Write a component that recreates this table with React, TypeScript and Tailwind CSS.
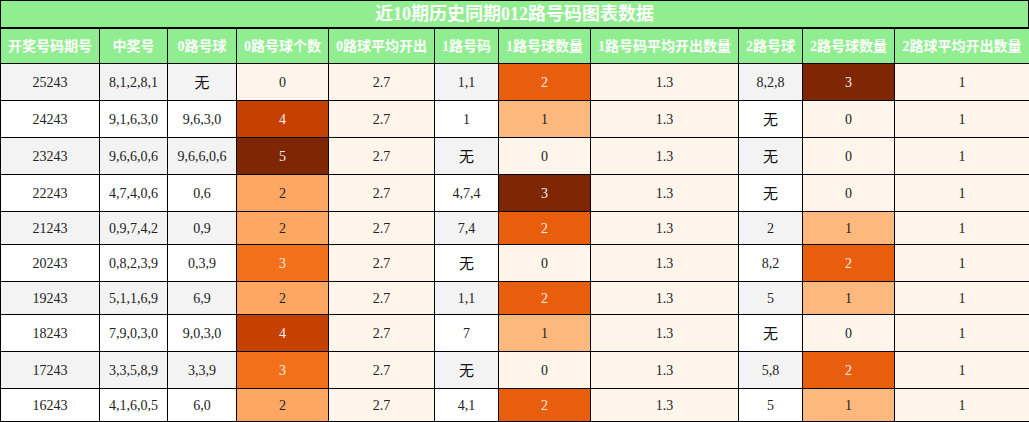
const headers = [
  '开奖号码期号',
  '中奖号',
  '0路号球',
  '0路号球个数',
  '0路球平均开出',
  '1路号码',
  '1路号球数量',
  '1路号码平均开出数量',
  '2路号球',
  '2路号球数量',
  '2路球平均开出数量',
];

const colWidths = ['w-[99px]', 'w-[68px]', 'w-[69px]', 'w-[92px]', 'w-[106px]', 'w-[64px]', 'w-[92px]', 'w-[148px]', 'w-[64px]', 'w-[92px]', 'w-[135px]'];

type Row = [string, string, string, number, string, string, number, string, string, number, string];

const rows: Row[] = [
  ['25243', '8,1,2,8,1', '无', 0, '2.7', '1,1', 2, '1.3', '8,2,8', 3, '1'],
  ['24243', '9,1,6,3,0', '9,6,3,0', 4, '2.7', '1', 1, '1.3', '无', 0, '1'],
  ['23243', '9,6,6,0,6', '9,6,6,0,6', 5, '2.7', '无', 0, '1.3', '无', 0, '1'],
  ['22243', '4,7,4,0,6', '0,6', 2, '2.7', '4,7,4', 3, '1.3', '无', 0, '1'],
  ['21243', '0,9,7,4,2', '0,9', 2, '2.7', '7,4', 2, '1.3', '2', 1, '1'],
  ['20243', '0,8,2,3,9', '0,3,9', 3, '2.7', '无', 0, '1.3', '8,2', 2, '1'],
  ['19243', '5,1,1,6,9', '6,9', 2, '2.7', '1,1', 2, '1.3', '5', 1, '1'],
  ['18243', '7,9,0,3,0', '9,0,3,0', 4, '2.7', '7', 1, '1.3', '无', 0, '1'],
  ['17243', '3,3,5,8,9', '3,3,9', 3, '2.7', '无', 0, '1.3', '5,8', 2, '1'],
  ['16243', '4,1,6,0,5', '6,0', 2, '2.7', '4,1', 2, '1.3', '5', 1, '1'],
];

// Oranges gradient, 0路 column scaled 0..5
const zeroScale: Record<number, string> = {
  0: 'bg-[#fff5eb] text-[#222]',
  2: 'bg-[#fda762] text-[#222]',
  3: 'bg-[#f3701b] text-[#f1f1f1]',
  4: 'bg-[#c54102] text-[#f1f1f1]',
  5: 'bg-[#7f2704] text-[#f1f1f1]',
};

// 1路 / 2路 columns scaled 0..3
const smallScale: Record<number, string> = {
  0: 'bg-[#fff5eb] text-[#222]',
  1: 'bg-[#fdb97d] text-[#222]',
  2: 'bg-[#e95e0d] text-[#f1f1f1]',
  3: 'bg-[#7f2704] text-[#f1f1f1]',
};

const cell = 'border border-black p-0 text-center align-middle';

function Num({ v }: { v: string }) {
  if (v !== '无') return <>{v}</>;
  return <span className="font-['Noto_Sans_CJK_SC',sans-serif] text-[15px] text-[#111]">无</span>;
}

export default function App() {
  return (
    <div className="w-[1029px] bg-white font-['Liberation_Serif','Noto_Sans_CJK_SC',serif] text-[14px] text-[#222]">
      <div className="h-[28px] border border-black bg-[#90ee90] text-center text-[18px] leading-[26px] font-bold text-white">
        近10期历史同期012路号码图表数据
      </div>
      <table className="w-[1029px] table-fixed border-collapse">
        <colgroup>
          {colWidths.map((w, i) => (
            <col key={i} className={w} />
          ))}
        </colgroup>
        <thead>
          <tr className="h-[35px] bg-[#90ee90] text-white">
            {headers.map((h) => (
              <th key={h} className={`${cell} font-bold whitespace-nowrap`}>
                {h}
              </th>
            ))}
          </tr>
        </thead>
        <tbody>
          {rows.map((r, i) => {
            const plain = i % 2 === 0 ? 'bg-[#f3f3f3]' : 'bg-white';
            const tall = r.includes('无');
            return (
              <tr key={r[0]} className={tall ? 'h-[37px]' : 'h-[33px]'}>
                <td className={`${cell} ${plain}`}>{r[0]}</td>
                <td className={`${cell} ${plain}`}>{r[1]}</td>
                <td className={`${cell} ${plain}`}>
                  <Num v={r[2]} />
                </td>
                <td className={`${cell} ${zeroScale[r[3]]}`}>{r[3]}</td>
                <td className={`${cell} bg-[#fff5eb]`}>{r[4]}</td>
                <td className={`${cell} ${plain}`}>
                  <Num v={r[5]} />
                </td>
                <td className={`${cell} ${smallScale[r[6]]}`}>{r[6]}</td>
                <td className={`${cell} bg-[#fff5eb]`}>{r[7]}</td>
                <td className={`${cell} ${plain}`}>
                  <Num v={r[8]} />
                </td>
                <td className={`${cell} ${smallScale[r[9]]}`}>{r[9]}</td>
                <td className={`${cell} bg-[#fff5eb]`}>{r[10]}</td>
              </tr>
            );
          })}
        </tbody>
      </table>
    </div>
  );
}
